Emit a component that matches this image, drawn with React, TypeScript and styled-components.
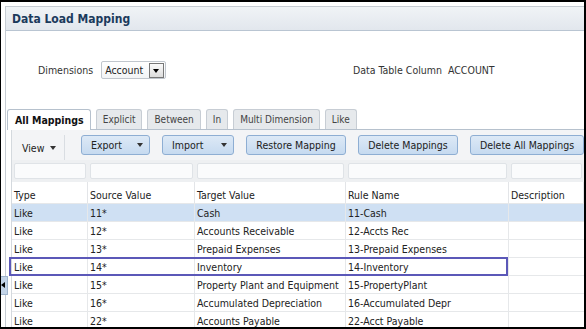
import styled, { createGlobalStyle } from "styled-components";

const Global = createGlobalStyle`
  html, body { margin: 0; padding: 0; background: #fff; }
  body { font-family: "DejaVu Sans Condensed", "DejaVu Sans", sans-serif; font-size: 10.5px; color: #222; }
`

const Frame = styled.div`
  position: relative;
  width: 586px;
  height: 329px;
  box-sizing: border-box;
  border-style: solid;
  border-color: #000;
  border-width: 2px 2px 2px 1px;
  padding: 4px 0 0 4px;
  overflow: hidden;
`

const Splitter = styled.div`
  position: absolute;
  left: 0;
  top: 274px;
  width: 6px;
  height: 17px;
  background: #c3d4e8;
  border: 1px solid #9fb4cc;
  border-left: none;
  &::after {
    content: "";
    position: absolute;
    left: 0;
    top: 5px;
    border-style: solid;
    border-width: 3px 4px 3px 0;
    border-color: transparent #000 transparent transparent;
  }
`

const Panel = styled.div`
  height: 100%;
  border-left: 1px solid #c6ccd3;
  border-top: 1px solid #c6ccd3;
`

const TitleBar = styled.div`
  height: 23px;
  display: flex;
  align-items: center;
  padding-left: 6px;
  background: linear-gradient(#f0f3f6, #e2e7ed);
  border-bottom: 1px solid #b9c5d2;
  font-weight: bold;
  font-size: 12px;
  color: #1b3a5c;
`

const FormRow = styled.div`
  height: 78px;
  display: flex;
  align-items: center;
  padding-left: 32px;
`

const Field = styled.div<{ $w?: number }>`
  display: flex;
  align-items: center;
  gap: 8px;
  width: ${(p) => (p.$w ? `${p.$w}px` : "auto")};
  color: #333;
`

const Select = styled.div`
  display: flex;
  align-items: center;
  justify-content: space-between;
  width: 65px;
  height: 18px;
  box-sizing: border-box;
  padding: 0 1px 0 3px;
  border: 1px solid #c0c6cd;
  border-radius: 2px;
  background: linear-gradient(#fff, #f2f4f6);
  color: #222;
`

const SelectButton = styled.span`
  position: relative;
  width: 15px;
  height: 15px;
  box-sizing: border-box;
  border: 1px solid #777;
  background: linear-gradient(#fbfbfb, #dcdcdc);
  &::after {
    content: "";
    position: absolute;
    left: 3px;
    top: 5px;
    border-style: solid;
    border-width: 4px 3.5px 0 3.5px;
    border-color: #000 transparent transparent transparent;
  }
`

const TabStrip = styled.div`
  display: flex;
  gap: 5px;
  height: 20px;
  padding-left: 1px;
  align-items: flex-end;
`

const Tab = styled.div<{ $active?: boolean }>`
  height: ${(p) => (p.$active ? "21px" : "20px")};
  box-sizing: border-box;
  display: flex;
  align-items: center;
  padding: ${(p) => (p.$active ? "0 6px 0 7px" : "0 6px")};
  border: 1px solid ${(p) => (p.$active ? "#b6c1cd" : "#c7cdd4")};
  border-bottom: none;
  border-radius: 3px 3px 0 0;
  background: ${(p) => (p.$active ? "#fff" : "#e6e9ec")};
  font-weight: ${(p) => (p.$active ? "bold" : "normal")};
  font-size: ${(p) => (p.$active ? "10.5px" : "10px")};
  color: ${(p) => (p.$active ? "#111" : "#444")};
  position: relative;
  margin-bottom: ${(p) => (p.$active ? "-1px" : "0")};
  z-index: 1;
`

const Content = styled.div`
  margin-left: 5px;
  border-top: 1px solid #b6c1cd;
  border-left: 1px solid #d4d9de;
`

const Toolbar = styled.div`
  height: 30px;
  display: flex;
  align-items: center;
  background: #f3f4f6;
`

const ViewMenu = styled.div`
  display: flex;
  align-items: center;
  gap: 6px;
  width: 54px;
  height: 25px;
  margin-top: 5px;
  padding-left: 10px;
  box-sizing: border-box;
  border-right: 1px solid #d9dde2;
  color: #222;
`

const Caret = styled.span`
  display: inline-block;
  border-style: solid;
  border-width: 4px 3.5px 0 3.5px;
  border-color: #333 transparent transparent transparent;
`

const Buttons = styled.div`
  display: flex;
  gap: 12px;
  margin-left: 16px;
`

const Button = styled.div<{ $w: number; $menu?: boolean }>`
  width: ${(p) => p.$w}px;
  height: 20px;
  box-sizing: border-box;
  display: flex;
  align-items: center;
  justify-content: ${(p) => (p.$menu ? "space-between" : "center")};
  padding: ${(p) => (p.$menu ? "0 6px 0 9px" : "0")};
  border: 1px solid #8eaed3;
  border-radius: 3px;
  background: linear-gradient(#dde9f6, #c6daf0);
  color: #222;
  white-space: nowrap;
`

const Grid = styled.div`
  display: grid;
  grid-template-columns: 76px 107px 151px 163px 1fr;
`

const FilterCell = styled.div`
  height: 22px;
  padding: 3px 2px;
  box-sizing: border-box;
  background: #eef0f2;
`

const FilterInput = styled.div`
  height: 100%;
  border: 1px solid #dfe3e7;
  border-radius: 2px;
  background: #fafbfc;
  box-sizing: border-box;
`

const HeadCell = styled.div`
  height: 21px;
  display: flex;
  align-items: flex-end;
  padding: 0 0 2px 2px;
  box-sizing: border-box;
  border-right: 1px solid #e3e5e8;
  color: #222;
  &:last-child { border-right: none; }
`

const Row = styled.div<{ $selected?: boolean; $outlined?: boolean }>`
  display: contents;
  & > div {
    background: ${(p) => (p.$selected ? "#cfe0f3" : "#fff")};
  }
  & > div:first-child::after {
    content: "";
    display: ${(p) => (p.$outlined ? "block" : "none")};
    position: absolute;
    left: -3px;
    top: -1px;
    width: 499px;
    height: 19px;
    box-sizing: border-box;
    border: 2px solid #5b58b8;
    z-index: 2;
  }
`

const Cell = styled.div`
  position: relative;
  height: 18px;
  display: flex;
  align-items: center;
  padding-left: 2px;
  box-sizing: border-box;
  border-right: 1px solid #e6e8ea;
  border-top: 1px solid #e6e8ea;
  white-space: nowrap;
  overflow: visible;
  &:last-child { border-right: none; }
`

const rows = [
  ["Like", "11*", "Cash", "11-Cash", ""],
  ["Like", "12*", "Accounts Receivable", "12-Accts Rec", ""],
  ["Like", "13*", "Prepaid Expenses", "13-Prepaid Expenses", ""],
  ["Like", "14*", "Inventory", "14-Inventory", ""],
  ["Like", "15*", "Property Plant and Equipment", "15-PropertyPlant", ""],
  ["Like", "16*", "Accumulated Depreciation", "16-Accumulated Depr", ""],
  ["Like", "22*", "Accounts Payable", "22-Acct Payable", ""],
]

const tabs = ["All Mappings", "Explicit", "Between", "In", "Multi Dimension", "Like"]
const columns = ["Type", "Source Value", "Target Value", "Rule Name", "Description"]

export default function App() {
  return (
    <Frame>
      <Global />
      <Splitter />
      <Panel>
        <TitleBar>Data Load Mapping</TitleBar>
        <FormRow>
          <Field $w={315}>
            Dimensions
            <Select>
              Account
              <SelectButton />
            </Select>
          </Field>
          <Field>Data Table Column&nbsp; ACCOUNT</Field>
        </FormRow>
        <TabStrip>
          {tabs.map((t, i) => (
            <Tab key={t} $active={i === 0}>{t}</Tab>
          ))}
        </TabStrip>
        <Content>
          <Toolbar>
            <ViewMenu>View <Caret /></ViewMenu>
            <Buttons>
              <Button $w={69} $menu>Export <Caret /></Button>
              <Button $w={72} $menu>Import <Caret /></Button>
              <Button $w={100}>Restore Mapping</Button>
              <Button $w={100}>Delete Mappings</Button>
              <Button $w={114}>Delete All Mappings</Button>
            </Buttons>
          </Toolbar>
          <Grid>
            {columns.map((c) => (
              <FilterCell key={c}><FilterInput /></FilterCell>
            ))}
            {columns.map((c) => (
              <HeadCell key={c}>{c}</HeadCell>
            ))}
            {rows.map((r, i) => (
              <Row key={i} $selected={i === 0} $outlined={i === 3}>
                {r.map((v, j) => (
                  <Cell key={j}>{v}</Cell>
                ))}
              </Row>
            ))}
          </Grid>
        </Content>
      </Panel>
    </Frame>
  )
}
